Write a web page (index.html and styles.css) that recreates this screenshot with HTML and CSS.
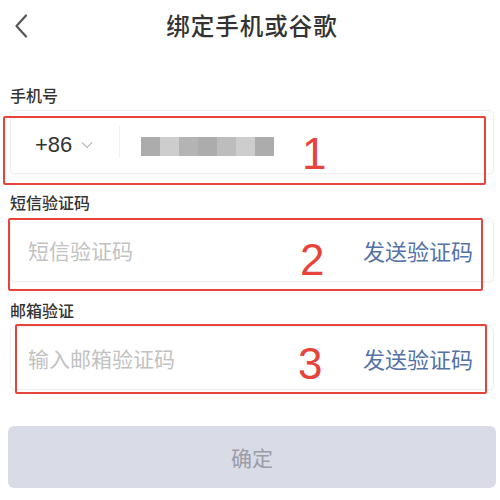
FILE: index.html
```html
<!DOCTYPE html>
<html lang="zh-CN">
<head>
    <meta charset="UTF-8">
    <meta name="viewport" content="width=device-width, initial-scale=1.0">
    <title>绑定手机或谷歌</title>
    <link rel="stylesheet" href="styles.css">
</head>
<body>
    <header class="topbar">
        <a class="back" href="#">
            <svg width="14" height="24" viewBox="0 0 14 24"><path d="M12 1.5 L2.5 12 L12 22.5" fill="none" stroke="#555" stroke-width="2.2" stroke-linecap="round" stroke-linejoin="round"/></svg>
        </a>
        <h1 class="title">绑定手机或谷歌</h1>
        <span></span>
    </header>

    <main class="form">
        <div class="label first">手机号</div>
        <div class="field">
            <div class="code">+86
                <svg width="12" height="8" viewBox="0 0 12 8"><path d="M1 1.5 L6 6.5 L11 1.5" fill="none" stroke="#bbb" stroke-width="1.2"/></svg>
            </div>
            <div class="sep"></div>
            <div class="blur">
                <span class="px a"></span><span class="px b"></span><span class="px c"></span><span class="px a"></span><span class="px d"></span><span class="px b"></span><span class="px a"></span>
            </div>
            <div class="mark mark-1"><span class="num num-1">1</span></div>
        </div>

        <div class="label">短信验证码</div>
        <div class="field">
            <span class="placeholder">短信验证码</span>
            <span class="send">发送验证码</span>
            <div class="mark mark-2"><span class="num num-2">2</span></div>
        </div>

        <div class="label">邮箱验证</div>
        <div class="field">
            <span class="placeholder">输入邮箱验证码</span>
            <span class="send">发送验证码</span>
            <div class="mark mark-3"><span class="num num-3">3</span></div>
        </div>

        <button class="submit">确定</button>
    </main>
</body>
</html>
```

FILE: styles.css
```css
body {
    margin: 0;
    background-color: #fff;
    font-family: "Liberation Sans", "Noto Sans CJK SC", sans-serif;
    color: #333;
}
.topbar {
    height: 50px;
    display: grid;
    grid-template-columns: 60px 1fr 60px;
    align-items: center;
}
.back {
    display: flex;
    padding-left: 14px;
    padding-top: 2px;
}
.title {
    margin: 0;
    text-align: center;
    font-family: "Noto Sans CJK SC", sans-serif;
    font-size: 23.5px;
    font-weight: 500;
    color: #333;
    letter-spacing: 1px;
    padding-left: 4px;
}
.form {
    padding: 0 6px 0 10px;
    display: flex;
    flex-direction: column;
}
.label {
    font-family: "Noto Sans CJK SC", sans-serif;
    font-size: 16px;
    line-height: 20px;
    font-weight: 500;
    color: #333;
    margin-top: 18px;
    margin-bottom: 6px;
}
.label.first {
    margin-top: 35px;
    margin-bottom: 5px;
}
.field {
    position: relative;
    height: 62px;
    border: 1px solid #efefef;
    border-radius: 5px;
    box-shadow: 0 1px 3px rgba(0, 0, 0, 0.04);
    display: flex;
    align-items: center;
    padding: 0 20px 0 17px;
}
.code {
    display: flex;
    align-items: center;
    gap: 9px;
    font-size: 22px;
    color: #333;
    padding-left: 7px;
    padding-top: 5px;
    width: 84px;
}
.sep {
    width: 1px;
    height: 32px;
    background-color: #f1f1f1;
}
.blur {
    display: flex;
    margin-left: 21px;
    margin-top: 8px;
    height: 19px;
}
.px {
    width: 19px;
    height: 19px;
}
.px.a { background-color: #acacac; }
.px.b { background-color: #cdcdcd; }
.px.c { background-color: #b4b4b4; }
.px.d { background-color: #bdbdbd; }
.placeholder {
    font-family: "Noto Sans CJK SC", sans-serif;
    font-size: 21px;
    color: #c2c2c2;
    flex: 1;
}
.send {
    font-family: "Noto Sans CJK SC", sans-serif;
    font-size: 22px;
    color: #5472a8;
}
.mark {
    position: absolute;
    border: 2px solid #e8433a;
    border-radius: 2px;
}
.mark-1 { left: -8px; right: 7px; top: 5px; bottom: -12px; }
.mark-2 { left: -3px; right: 10px; top: -1px; bottom: -10px; }
.mark-3 { left: 4px; right: 6px; top: -3px; bottom: -5px; }
.num {
    position: absolute;
    font-family: "Liberation Sans", sans-serif;
    font-size: 44px;
    line-height: 44px;
    color: #e8433a;
}
.num-1 { left: 297px; top: 14px; }
.num-2 { left: 290px; top: 18px; }
.num-3 { left: 281px; top: 16px; }
.submit {
    margin-top: 36px;
    height: 62px;
    border: none;
    border-radius: 6px;
    background-color: #d9dbe7;
    color: #9c9ca8;
    font-family: "Noto Sans CJK SC", sans-serif;
    font-size: 21px;
    margin-left: -2px;
    margin-right: -2px;
}
```
